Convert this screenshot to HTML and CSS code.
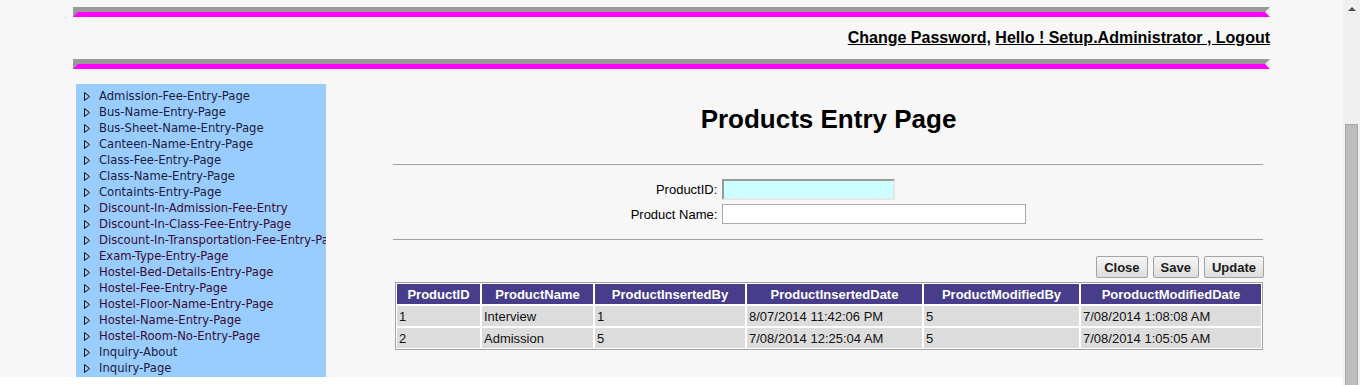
FILE: index.html
```html
<!DOCTYPE html>
<html>
<head>
<meta charset="utf-8">
<title>Products Entry Page</title>
<link rel="stylesheet" href="styles.css">
</head>
<body>
<div class="screen">
  <div class="viewport">
    <div class="sheet">
      <div class="wrap">
        <div class="bar"></div>
        <div class="topnav"><a href="#">Change Password,</a> <a href="#">Hello ! Setup.Administrator , Logout</a></div>
        <div class="bar bar2"></div>
        <div class="body">
          <nav class="side">
            <ul class="menu">
              <li><svg class="tri" width="6" height="9" viewBox="0 0 6 9"><polygon points="0.5,0.5 5.5,4.5 0.5,8.5" /></svg><a href="#">Admission-Fee-Entry-Page</a></li>
              <li><svg class="tri" width="6" height="9" viewBox="0 0 6 9"><polygon points="0.5,0.5 5.5,4.5 0.5,8.5" /></svg><a href="#">Bus-Name-Entry-Page</a></li>
              <li><svg class="tri" width="6" height="9" viewBox="0 0 6 9"><polygon points="0.5,0.5 5.5,4.5 0.5,8.5" /></svg><a href="#">Bus-Sheet-Name-Entry-Page</a></li>
              <li><svg class="tri" width="6" height="9" viewBox="0 0 6 9"><polygon points="0.5,0.5 5.5,4.5 0.5,8.5" /></svg><a href="#">Canteen-Name-Entry-Page</a></li>
              <li><svg class="tri" width="6" height="9" viewBox="0 0 6 9"><polygon points="0.5,0.5 5.5,4.5 0.5,8.5" /></svg><a href="#">Class-Fee-Entry-Page</a></li>
              <li><svg class="tri" width="6" height="9" viewBox="0 0 6 9"><polygon points="0.5,0.5 5.5,4.5 0.5,8.5" /></svg><a href="#">Class-Name-Entry-Page</a></li>
              <li><svg class="tri" width="6" height="9" viewBox="0 0 6 9"><polygon points="0.5,0.5 5.5,4.5 0.5,8.5" /></svg><a href="#">Containts-Entry-Page</a></li>
              <li><svg class="tri" width="6" height="9" viewBox="0 0 6 9"><polygon points="0.5,0.5 5.5,4.5 0.5,8.5" /></svg><a href="#" class="seen">Discount-In-Admission-Fee-Entry</a></li>
              <li><svg class="tri" width="6" height="9" viewBox="0 0 6 9"><polygon points="0.5,0.5 5.5,4.5 0.5,8.5" /></svg><a href="#" class="seen">Discount-In-Class-Fee-Entry-Page</a></li>
              <li><svg class="tri" width="6" height="9" viewBox="0 0 6 9"><polygon points="0.5,0.5 5.5,4.5 0.5,8.5" /></svg><a href="#" class="seen">Discount-In-Transportation-Fee-Entry-Page</a></li>
              <li><svg class="tri" width="6" height="9" viewBox="0 0 6 9"><polygon points="0.5,0.5 5.5,4.5 0.5,8.5" /></svg><a href="#" class="seen">Exam-Type-Entry-Page</a></li>
              <li><svg class="tri" width="6" height="9" viewBox="0 0 6 9"><polygon points="0.5,0.5 5.5,4.5 0.5,8.5" /></svg><a href="#" class="seen">Hostel-Bed-Details-Entry-Page</a></li>
              <li><svg class="tri" width="6" height="9" viewBox="0 0 6 9"><polygon points="0.5,0.5 5.5,4.5 0.5,8.5" /></svg><a href="#" class="seen">Hostel-Fee-Entry-Page</a></li>
              <li><svg class="tri" width="6" height="9" viewBox="0 0 6 9"><polygon points="0.5,0.5 5.5,4.5 0.5,8.5" /></svg><a href="#" class="seen">Hostel-Floor-Name-Entry-Page</a></li>
              <li><svg class="tri" width="6" height="9" viewBox="0 0 6 9"><polygon points="0.5,0.5 5.5,4.5 0.5,8.5" /></svg><a href="#" class="seen">Hostel-Name-Entry-Page</a></li>
              <li><svg class="tri" width="6" height="9" viewBox="0 0 6 9"><polygon points="0.5,0.5 5.5,4.5 0.5,8.5" /></svg><a href="#" class="seen">Hostel-Room-No-Entry-Page</a></li>
              <li><svg class="tri" width="6" height="9" viewBox="0 0 6 9"><polygon points="0.5,0.5 5.5,4.5 0.5,8.5" /></svg><a href="#">Inquiry-About</a></li>
              <li><svg class="tri" width="6" height="9" viewBox="0 0 6 9"><polygon points="0.5,0.5 5.5,4.5 0.5,8.5" /></svg><a href="#">Inquiry-Page</a></li>
            </ul>
          </nav>
          <main class="main">
            <h1 class="title">Products Entry Page</h1>
            <hr class="rule">
            <div class="form">
              <label class="lbl" for="pid">ProductID:</label>
              <input class="inp inp-id" id="pid" type="text">
              <label class="lbl" for="pname">Product Name:</label>
              <input class="inp inp-name" id="pname" type="text">
            </div>
            <hr class="rule rule2">
            <div class="actions">
              <button class="btn" type="button">Close</button>
              <button class="btn" type="button">Save</button>
              <button class="btn" type="button">Update</button>
            </div>
            <table class="grid">
              <colgroup>
                <col class="c1"><col class="c2"><col class="c3"><col class="c4"><col class="c5"><col class="c6">
              </colgroup>
              <thead>
                <tr><th>ProductID</th><th>ProductName</th><th>ProductInsertedBy</th><th>ProductInsertedDate</th><th>ProductModifiedBy</th><th>PoroductModifiedDate</th></tr>
              </thead>
              <tbody>
                <tr><td>1</td><td>Interview</td><td>1</td><td>8/07/2014 11:42:06 PM</td><td>5</td><td>7/08/2014 1:08:08 AM</td></tr>
                <tr><td>2</td><td>Admission</td><td>5</td><td>7/08/2014 12:25:04 AM</td><td>5</td><td>7/08/2014 1:05:05 AM</td></tr>
              </tbody>
            </table>
          </main>
        </div>
      </div>
    </div>
  </div>
  <div class="scrollbar">
    <div class="arrow"></div>
    <div class="thumb"></div>
  </div>
</div>
</body>
</html>
```

FILE: styles.css
```css
* { box-sizing: border-box; }
html, body { margin: 0; padding: 0; background: #fff; }
body { font-family: "Liberation Sans", Arial, sans-serif; overflow: hidden; }

.screen { display: flex; width: 1360px; height: 385px; }
.viewport { width: 1343px; height: 385px; overflow: hidden; }
.sheet { background: #f7f7f7; height: 377px; overflow: hidden; }
.wrap { width: 1197px; margin: 0 auto; padding-top: 7px; }

.bar {
  height: 10px;
  border-top: 5px solid #999999;
  border-bottom: 5px solid #ff00ff;
  border-left: 5px solid #999999;
  border-right: 5px solid #ececec;
}
.bar2 { margin-top: 12px; }

.topnav {
  margin-top: 12px;
  text-align: right;
  font-size: 16px;
  font-weight: bold;
  line-height: 18px;
}
.topnav a { color: #000; text-decoration: underline; }

.body { display: flex; margin-top: 15px; align-items: flex-start; }

.side {
  margin-left: 3px;
  width: 250px;
  height: 293px;
  background: #99ccff;
  overflow: hidden;
  flex: none;
}
.menu { list-style: none; margin: 0; padding: 4px 0 0 8px; }
.menu li {
  display: flex;
  align-items: center;
  height: 16px;
  white-space: nowrap;
  font-family: "DejaVu Sans", Verdana, sans-serif;
  font-size: 11.6px;
}
.tri { flex: none; margin-right: 9px; }
.tri polygon { fill: none; stroke: #000; stroke-width: 1; }
.menu a { color: #1b1b3b; text-decoration: none; }
.menu a.seen { color: #3a0c30; }

.main { margin-left: 67px; width: 871px; flex: none; }

.title {
  margin: 20px 0 0;
  font-size: 26px;
  line-height: 30px;
  font-weight: bold;
  text-align: center;
  color: #000;
}

.rule {
  margin: 30px 1px 0 0;
  height: 0;
  border: 0;
  border-top: 1px solid #a0a0a0;
}
.rule2 { margin-top: 15px; }

.form {
  display: grid;
  grid-template-columns: auto auto;
  justify-content: center;
  column-gap: 5px;
  row-gap: 4px;
  margin-top: 14px;
  align-items: center;
  font-size: 13px;
  color: #000;
}
.lbl { text-align: right; }
.inp { display: block; margin: 0; padding: 1px 2px; font: 13px "Liberation Sans", Arial, sans-serif; }
.inp-id {
  width: 173px;
  height: 21px;
  background: #ccffff;
  border: 2px solid;
  border-color: #9a9a9a #e6e6e6 #e6e6e6 #9a9a9a;
}
.inp-name {
  width: 304px;
  height: 20px;
  background: #fff;
  border: 1px solid #a9a9a9;
}

.actions {
  display: flex;
  justify-content: flex-end;
  gap: 5px;
  margin-top: 16px;
}
.btn {
  height: 22px;
  margin: 0;
  padding: 0 7px;
  font: bold 13px "Liberation Sans", Arial, sans-serif;
  color: #1a1a1a;
  background: linear-gradient(#f6f6f6, #dddddd);
  border: 1px solid #a3a3a3;
  border-radius: 2px;
}

.grid {
  margin: 4px 0 0 2px;
  width: 868px;
  table-layout: fixed;
  border-collapse: separate;
  border-spacing: 0;
  border: 1px solid #a3a3a3;
  background: #fff;
  font-size: 13px;
}
.c1 { width: 85px; }
.c2 { width: 113px; }
.c3 { width: 152px; }
.c4 { width: 177px; }
.c5 { width: 157px; }
.c6 { width: 182px; }
.grid th, .grid td {
  border: 1px solid #fff;
  white-space: nowrap;
  overflow: hidden;
}
.grid th {
  height: 22px;
  padding: 0 2px;
  background: #483d8b;
  color: #fff;
  font-weight: bold;
  text-align: center;
}
.grid td {
  height: 22px;
  padding: 0 2px;
  background: #dcdcdc;
  color: #111;
  text-align: left;
}

.scrollbar {
  width: 17px;
  height: 385px;
  background: #f0f0f0;
  display: flex;
  flex-direction: column;
  align-items: center;
}
.arrow {
  margin-top: 7px;
  width: 0;
  height: 0;
  border-left: 4px solid transparent;
  border-right: 4px solid transparent;
  border-bottom: 4px solid #505050;
}
.thumb {
  margin-top: 113px;
  width: 13px;
  flex: 1;
  background: #bdbdbd;
  border: 1px solid #a8a8a8;
  border-bottom: 0;
}
```
